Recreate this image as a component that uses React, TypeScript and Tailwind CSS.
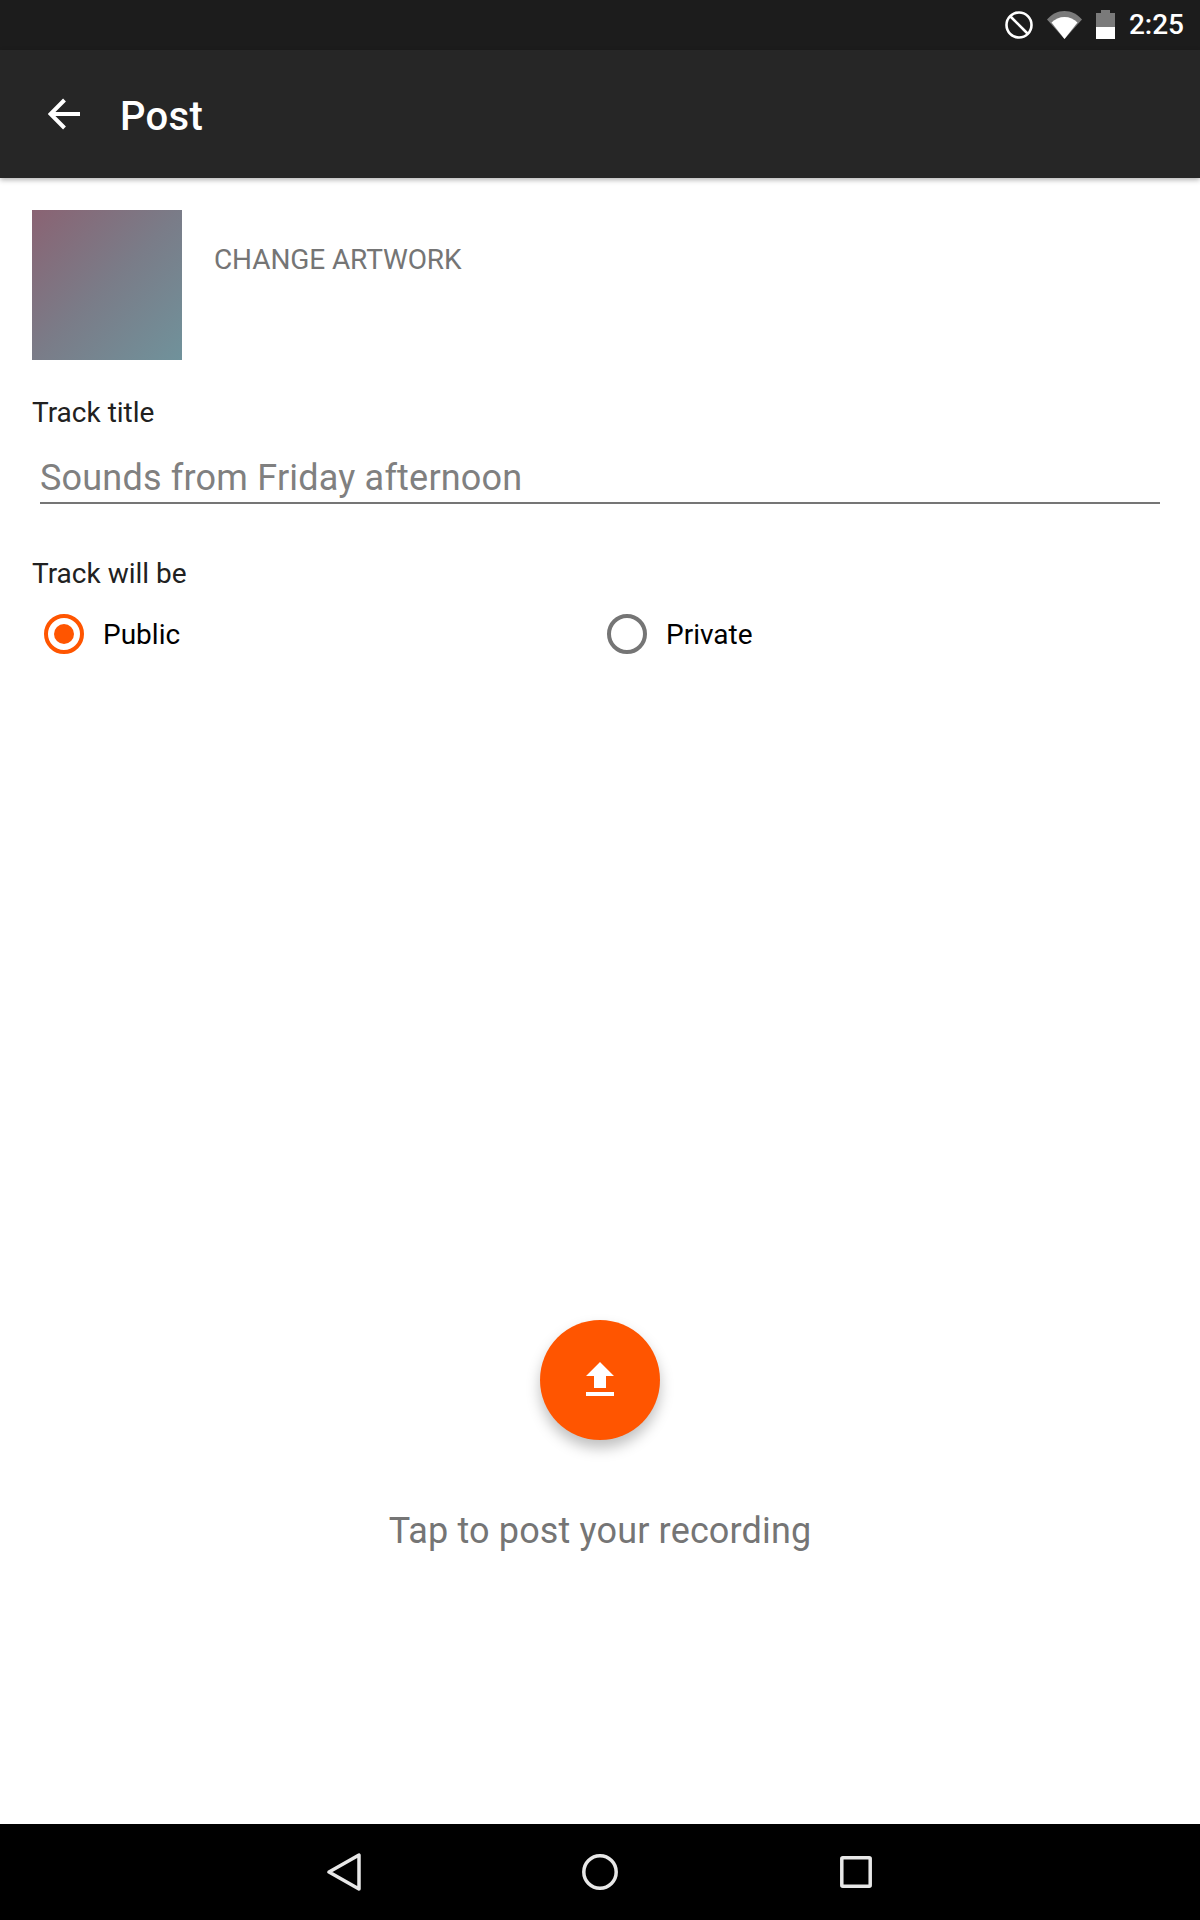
const roboto = "font-['Roboto',sans-serif]";

const StatusIcons = () => (
  <div className="flex items-center">
    {/* do not disturb */}
    <svg width="28" height="28" viewBox="0 0 28 28">
      <circle cx="14" cy="14" r="12.5" fill="none" stroke="#fff" strokeWidth="2.6" />
      <path d="M5.5 5.5 22.5 22.5" stroke="#fff" strokeWidth="2.6" />
    </svg>
    {/* wifi */}
    <svg width="35" height="28" viewBox="0 0 35 28" className="ml-[14px]">
      <path d="M0 8.5C4.5 3.4 10.6 0 17.5 0S30.500 3.400 35 8.500L17.500 28z" fill="#7a7a7a" />
      <path d="M4.500 11.500C8 8 12.500 6 17.500 6s9.500 2 13 5.500L17.500 28z" fill="#fff" />
    </svg>
    {/* battery */}
    <svg width="19" height="29" viewBox="0 0 19 29" className="ml-[14px] -mt-[2px]">
      <path d="M5 0h9v3h5v26H0V3h5z" fill="#7a7a7a" />
      <path d="M0 17h19v12H0z" fill="#fff" />
    </svg>
  </div>
);

const Radio = ({ label, checked }: { label: string; checked?: boolean }) => (
  <div className="flex items-center">
    <div
      className={`flex h-[40px] w-[40px] items-center justify-center rounded-full border-[4px] ${
        checked ? "border-[#ff5500]" : "border-[#757575]"
      }`}
    >
      {checked && <div className="h-[20px] w-[20px] rounded-full bg-[#ff5500]" />}
    </div>
    <span className="ml-[19px] mt-[3px] text-[28px] leading-[40px] text-black">{label}</span>
  </div>
);

export default function App() {
  return (
    <div className={`flex h-[1920px] w-[1200px] flex-col bg-white ${roboto}`}>
      {/* status bar */}
      <div className="flex h-[50px] items-center justify-end bg-[#1c1c1c] pr-[16px]">
        <StatusIcons />
        <span className="ml-[14px] text-[28px] font-medium leading-[50px] text-white">2:25</span>
      </div>

      {/* toolbar */}
      <div className="relative z-10 flex h-[128px] items-center bg-[#262626] pl-[48px] shadow-[0_2px_5px_rgba(0,0,0,0.3)]">
        <svg width="32" height="32" viewBox="0 0 32 32" fill="none">
          <path d="M32 16H3M16.500 2 2.500 16l14 14" stroke="#fff" strokeWidth="4" />
        </svg>
        <h1 className="ml-[40px] mt-[5px] text-[40px] font-medium leading-none tracking-[0.3px] text-white">Post</h1>
      </div>

      {/* form */}
      <div className="flex flex-1 flex-col pl-[32px] pr-[40px] pt-[32px]">
        <div className="flex items-start">
          <div className="h-[150px] w-[150px] bg-[linear-gradient(135deg,#8a6373,#7a7c88_50%,#70929b)]" />
          <span className="ml-[32px] mt-[33px] text-[28px] leading-[34px] tracking-[-0.1px] text-[#757575]">
            CHANGE ARTWORK
          </span>
        </div>

        <label className="mt-[35px] text-[28px] leading-[36px] text-[#212121]">Track title</label>
        <div className="ml-[8px] mt-[23px] border-b-2 border-[#757575] text-[36px] leading-[48px] tracking-[0.2px] text-[#808080]">
          Sounds from Friday afternoon
        </div>

        <label className="mt-[52px] text-[28px] leading-[36px] text-[#212121]">Track will be</label>
        <div className="ml-[12px] mt-[20px] grid grid-cols-[563px_1fr]">
          <Radio label="Public" checked />
          <Radio label="Private" />
        </div>

        {/* post action */}
        <div className="-ml-[32px] -mr-[40px] mt-[665px] flex flex-col items-center">
          <button className="flex h-[120px] w-[120px] items-center justify-center rounded-full bg-[#ff5500] shadow-[0_8px_14px_rgba(0,0,0,0.25)]">
            <svg width="48" height="48" viewBox="0 0 24 24" fill="#fff">
              <path d="M9 16h6v-6h4l-7-7-7 7h4zm-4 2h14v2H5z" />
            </svg>
          </button>
          <p className="mt-[67px] text-[36px] leading-[48px] tracking-[0.15px] text-[#757575]">
            Tap to post your recording
          </p>
        </div>
      </div>

      {/* nav bar */}
      <div className="flex h-[96px] items-center justify-center bg-black pr-[1px]">
        <svg width="34" height="38" viewBox="0 0 34 38" fill="none" className="mr-[221px]">
          <path d="M32 2v34L2 19z" stroke="#e8e8e8" strokeWidth="3.500" strokeLinejoin="round" />
        </svg>
        <svg width="36" height="36" viewBox="0 0 36 36" fill="none">
          <circle cx="18" cy="18" r="16.200" stroke="#e8e8e8" strokeWidth="3.500" />
        </svg>
        <svg width="32" height="32" viewBox="0 0 32 32" fill="none" className="ml-[222px]">
          <rect x="1.800" y="1.800" width="28.400" height="28.400" rx="1" stroke="#e8e8e8" strokeWidth="3.500" />
        </svg>
      </div>
    </div>
  );
}
